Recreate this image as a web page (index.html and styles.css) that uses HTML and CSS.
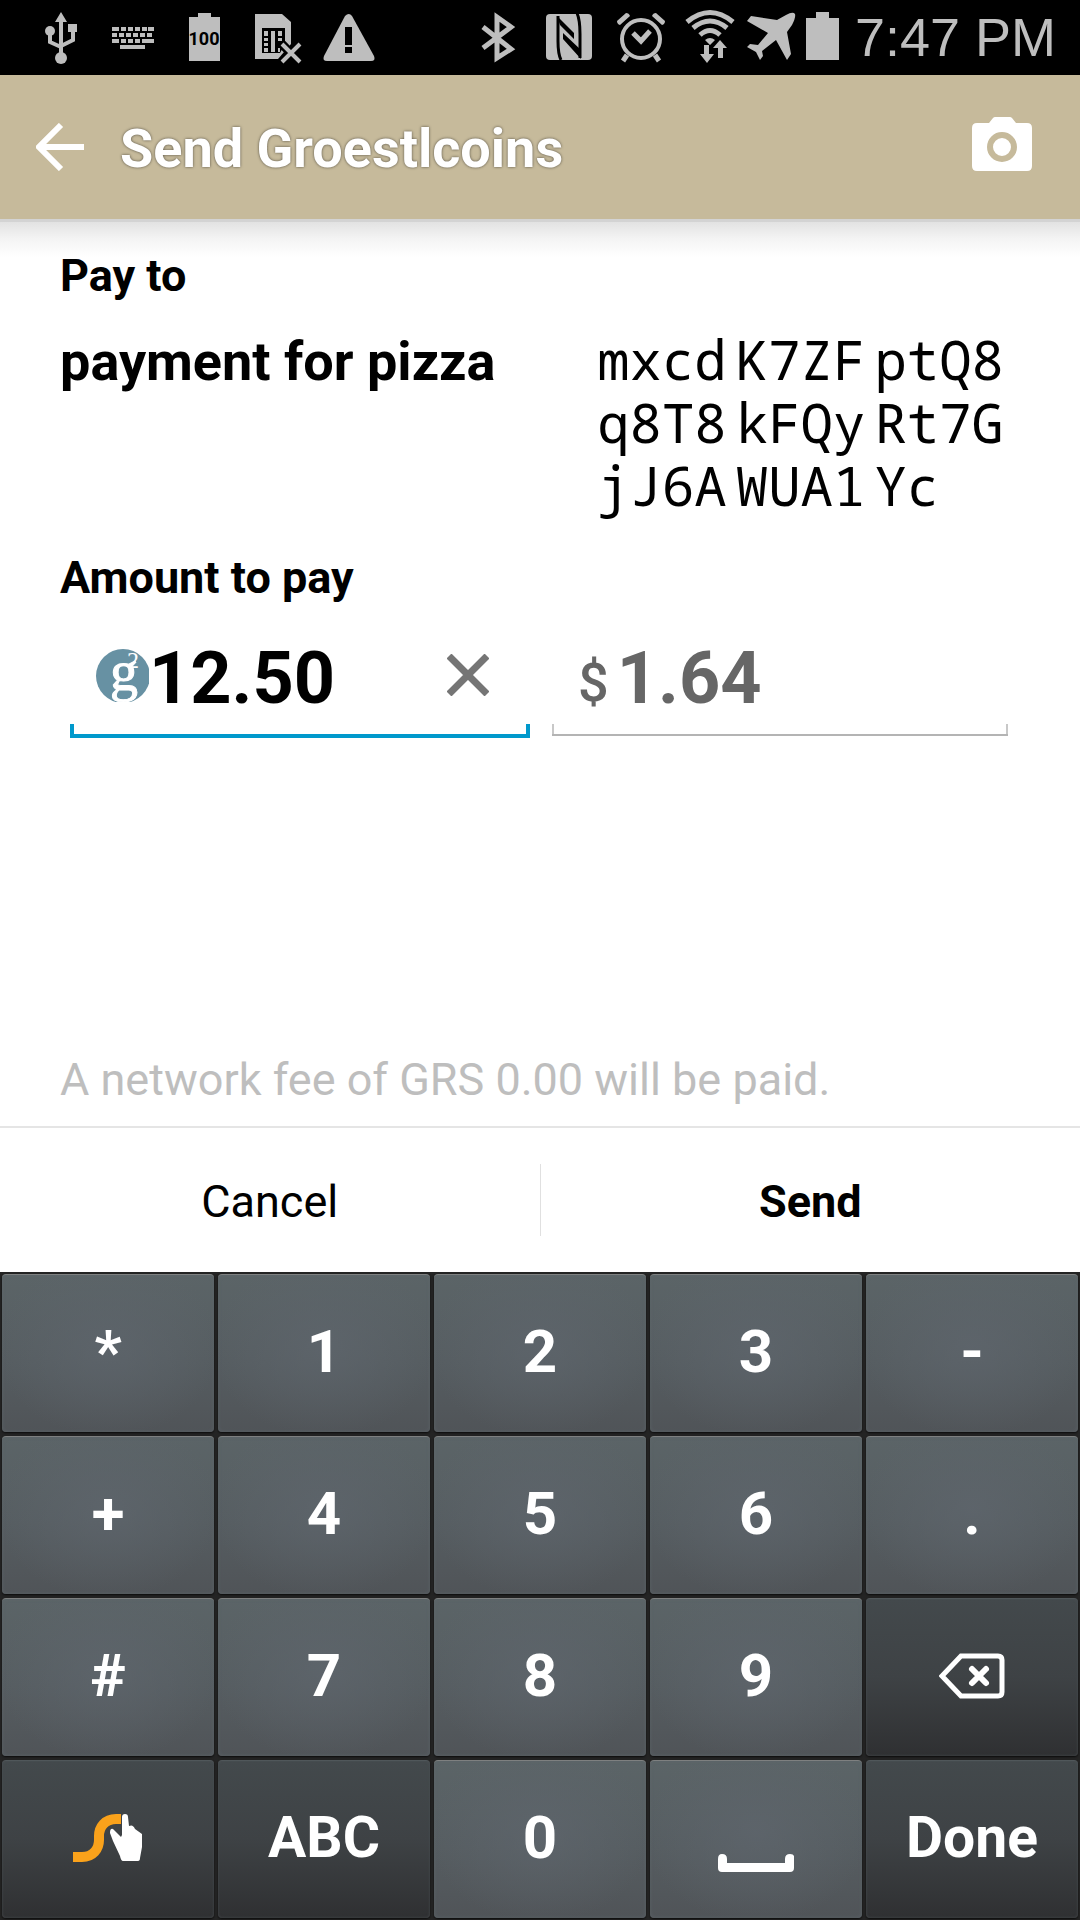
FILE: index.html
```html
<!DOCTYPE html>
<html lang="en">
<head>
<meta charset="utf-8">
<meta name="viewport" content="width=device-width, initial-scale=1">
<title>Send Groestlcoins</title>
<link rel="stylesheet" href="styles.css">
</head>
<body>
<div class="screen">
  <div class="status">
    <div class="status-group">
      <svg class="si" viewBox="24 0 72 75" aria-hidden="true"><path d="M61 20v36M61 47l-11-5V31M61 46l12-6V28" fill="none" stroke="currentColor" stroke-width="4"/><path d="M61 12l6 10H55zM68 24h9v8h-9z"/><circle cx="50" cy="31" r="5"/><circle cx="61" cy="58" r="6"/></svg>
      <svg class="si" viewBox="96 0 72 75" aria-hidden="true"><path d="M114 29h40M112 35h42M114 41h40" fill="none" stroke="currentColor" stroke-width="4" stroke-dasharray="5 2"/><path d="M112 27h4v4h-4zM148 27h6v4h-6zM112 39h6v4h-6zM147 39h7v4h-7zM120 45h25v4h-25z"/></svg>
      <svg class="si" viewBox="168 0 72 75" aria-hidden="true"><path d="M189 17h9v-4h13v4h9v44h-31z"/><text class="charge" x="204" y="45" text-anchor="middle">100</text></svg>
      <svg class="si" viewBox="240 0 72 75" aria-hidden="true"><path d="M255 14h27l9 8v22l-13 15H255z"/><path d="M262 28h23v16l-5 9h-18z" fill="#000"/><path d="M264 31h4v5h-4zM264 38h4v3h-4zM264 43h4v3h-4zM264 48h4v4h-4zM271 31h4v21h-4zM278 31h4v5h-4zM278 38h4v3h-4zM278 48h2v4h-2z"/><path d="M282 44l17 18M299 44l-17 18" stroke="#000" stroke-width="9"/><path d="M282 44l18 18M300 44l-18 18" stroke="currentColor" stroke-width="4"/></svg>
      <svg class="si" viewBox="312 0 72 75" aria-hidden="true"><path d="M345 16q4-4 7 0l22 40q2 5-3 5h-44q-5 0-3-5z"/><path d="M345 27h7v18h-7zM345 47h7v6h-7z" fill="#000"/></svg>
    </div>
    <div class="status-group">
      <svg class="si" viewBox="462 0 72 75" aria-hidden="true"><path d="M484 27l28 22-14 9V17l14 10-28 21" fill="none" stroke="currentColor" stroke-width="5"/></svg>
      <svg class="si" viewBox="534 0 72 75" aria-hidden="true"><rect x="547" y="14" width="46" height="46" rx="4"/><path d="M559 16v25q0 13 3 19M578 13q3 7 3 21v24" fill="none" stroke="#000" stroke-width="3"/><path d="M558 16l17 17v6l-14-14zM564 33l18 17v9l-18-20z" fill="#000"/></svg>
      <svg class="si" viewBox="606 0 72 75" aria-hidden="true"><circle cx="642" cy="39" r="19" fill="none" stroke="currentColor" stroke-width="4"/><path d="M634 33l8 8 9-10M628 55l-4 6M656 55l4 6" fill="none" stroke="currentColor" stroke-width="5"/><path d="M618 21l9-8q3 0 4 3l-10 9q-3-1-3-4zM666 21l-9-8q-3 0-4 3l10 9q3-1 3-4z"/></svg>
      <svg class="si si-wifi" viewBox="678 0 66 75" aria-hidden="true"><path d="M688 22q23-19 46 0M694 28q17-14 34 0M701 35q10-9 20 0" fill="none" stroke="currentColor" stroke-width="5"/><path d="M706 40q5-4 10 0l-5 5zM705 45h5v9h5l-7 9-7-9h4zM719 58h5v-10h4l-7-8-7 8h5z"/></svg>
      <svg class="si si-plane" viewBox="744 0 54 75" aria-hidden="true"><path d="M748 21l4-5 26 4 9-5q7-4 9-1 1 3-3 11l-5 7 4 22-4 6-11-20-14 11 1 5-3 4-4-8-9-5 3-3 8 1 10-12z"/></svg>
      <svg class="si si-battery" viewBox="798 0 50 75" aria-hidden="true"><path d="M807 18h10v-6h13v6h10v42h-33z"/></svg>
      <span class="clock">7:47 PM</span>
    </div>
  </div>

  <header class="appbar">
    <button class="icon-button" type="button" aria-label="Back"><svg width="48" height="48" viewBox="0 0 48 48"><path d="M48 24H4M25 2L3 24l22 22" fill="none" stroke="#fff" stroke-width="6"/></svg></button>
    <h1 class="title">Send Groestlcoins</h1>
    <button class="icon-button icon-camera" type="button" aria-label="Scan code"><svg width="60" height="54" viewBox="0 0 60 54"><path d="M5 6h12l4-5q1-1 2-1h15q1 0 2 1l4 5h11q5 0 5 5v38q0 5-5 5H5q-5 0-5-5V11q0-5 5-5z" fill="#fff"/><circle cx="30" cy="30" r="12" fill="none" stroke="#c6ba9b" stroke-width="6"/></svg></button>
  </header>

  <main class="content">
    <h2 class="heading">Pay to</h2>
    <div class="recipient">
      <p class="name">payment for pizza</p>
      <p class="address"><span>mxcd</span><span>K7ZF</span><span>ptQ8</span><span>q8T8</span><span>kFQy</span><span>Rt7G</span><span>jJ6A</span><span>WUA1</span><span>Yc</span></p>
    </div>
    <h2 class="heading"><label for="amount">Amount to pay</label></h2>
    <div class="amounts">
      <div class="field field-active">
        <svg class="coin" viewBox="0 0 53 53" aria-hidden="true"><defs><clipPath id="disc"><circle cx="27" cy="27" r="27"/></clipPath></defs><g clip-path="url(#disc)"><rect width="53" height="53" fill="#6791a3"/><text class="coin-g" x="14" y="41">g</text><text class="coin-2" x="31" y="19">2</text></g></svg>
        <input class="amount" id="amount" type="text" inputmode="decimal" value="12.50">
        <button class="clear" type="button" aria-label="Clear amount"><svg width="42" height="42" viewBox="0 0 42 42"><path d="M2 2l38 38M40 2L2 40" stroke="#757575" stroke-width="7"/></svg></button>
      </div>
      <div class="field">
        <label class="currency" for="local">$</label>
        <input class="amount amount-local" id="local" type="text" inputmode="decimal" value="1.64">
      </div>
    </div>
    <p class="fee">A network fee of GRS 0.00 will be paid.</p>
  </main>

  <div class="actions">
    <button class="action" type="button">Cancel</button>
    <button class="action action-main" type="button">Send</button>
  </div>

  <div class="keyboard">
    <button class="key" type="button">*</button>
    <button class="key" type="button">1</button>
    <button class="key" type="button">2</button>
    <button class="key" type="button">3</button>
    <button class="key" type="button">-</button>
    <button class="key" type="button">+</button>
    <button class="key" type="button">4</button>
    <button class="key" type="button">5</button>
    <button class="key" type="button">6</button>
    <button class="key" type="button">.</button>
    <button class="key" type="button">#</button>
    <button class="key" type="button">7</button>
    <button class="key" type="button">8</button>
    <button class="key" type="button">9</button>
    <button class="key key-dark" type="button" aria-label="Delete"><svg width="66" height="46" viewBox="0 0 66 46"><path d="M22 3h37q4 0 4 4v32q0 4-4 4H22L3 23z" fill="none" stroke="#fff" stroke-width="5"/><path d="M33 16l14 14M47 16L33 30" stroke="#fff" stroke-width="6" stroke-linecap="round"/></svg></button>
    <button class="key key-dark" type="button" aria-label="Swype"><svg width="70" height="50" viewBox="73 1812 70 50"><path d="M73 1856h9c11 0 17-8 17-17v-4c0-9 6-17 17-17h5" fill="none" stroke="#faa21b" stroke-width="10"/><path d="M122 1816q0-3 3-3t3 3l1 9q4-2 6 3l7 5v13l-2 11q0 3-2 3h-15q-2 0-3-5l-7-15-3-8q0-5 3-4l8 8 1-2z" fill="#fff"/></svg></button>
    <button class="key key-dark" type="button">ABC</button>
    <button class="key" type="button">0</button>
    <button class="key key-space" type="button" aria-label="Space"><svg width="76" height="18" viewBox="0 0 76 18"><path d="M4 0q5 0 5 5v4h58V5q0-5 5-5t4 5v9q0 4-4 4H4q-4 0-4-4V5q0-5 4-5z" fill="#fff"/></svg></button>
    <button class="key key-dark" type="button">Done</button>
  </div>
</div>
</body>
</html>
```
FILE: styles.css
```css
* { box-sizing: border-box; }
body { margin: 0; background: #fff; color: #000; font-family: Roboto, "Liberation Sans", sans-serif; }
h1, h2, p { margin: 0; }
button, input { margin: 0; padding: 0; border: 0; background: none; color: inherit; font: inherit; outline: none; }
svg { display: block; }
.screen { display: flex; flex-direction: column; min-height: 100vh; }

.status { display: flex; justify-content: space-between; height: 75px; padding: 0 24px; background: #000; color: #bebebe; }
.status-group { display: flex; align-items: center; }
.si { width: 72px; height: 75px; fill: currentColor; }
.si-wifi { width: 66px; }
.si-plane { width: 54px; }
.si-battery { width: 50px; }
.charge { fill: #000; font-size: 18px; font-weight: 700; }
.clock { padding-left: 8px; font-family: "Liberation Sans", sans-serif; font-size: 54px; line-height: 75px; }

.appbar { display: flex; align-items: center; height: 144px; padding: 0 48px 0 36px; background: #c6ba9b; }
.icon-camera { padding-bottom: 6px; }
.title { flex: 1; padding: 2px 0 0 36px; color: #fff; font-size: 54px; line-height: 63px; font-weight: 700; text-shadow: 0 0 3px rgba(0, 0, 0, .6); }

.content { display: flex; flex: 1; flex-direction: column; padding: 30px 60px 19px; background: linear-gradient(#d3d3d3 3px, #e2e2e2 3px, #f4f4f4 20px, #fff 38px); }
.heading { font-size: 45px; line-height: 54px; font-weight: 700; }
.recipient { display: flex; align-items: flex-start; justify-content: space-between; padding: 25px 16px 34px 0; }
.name { padding-top: 2px; font-size: 54px; line-height: 63px; font-weight: 700; }
.address { display: grid; grid-template-columns: repeat(3, auto); column-gap: 9px; font-family: "Droid Sans Mono", "Noto Sans Mono", "DejaVu Sans Mono", monospace; font-size: 54px; line-height: 63px; }
.amounts { display: grid; grid-template-columns: 460fr 456fr; column-gap: 22px; padding: 32px 12px 0 10px; }
.field { position: relative; display: flex; align-items: center; height: 84px; padding: 0 26px 13px; border-bottom: 2px solid #b4b4b4; box-sizing: content-box; min-width: 0; }
.field::after { content: ""; position: absolute; left: 0; right: 0; bottom: 0; height: 10px; border: solid #c8c8c8; border-width: 0 2px; }
.field-active { border-bottom: 4px solid #0099cc; padding-right: 41px; }
.field-active::after { border-color: #0099cc; border-width: 0 4px; }
.coin { flex: none; width: 53px; height: 53px; margin-bottom: 8px; }
.coin-g { fill: #fff; stroke: #fff; stroke-width: 1px; font-family: "Liberation Serif", serif; font-size: 56px; }
.coin-2 { fill: #fff; font-family: "Liberation Serif", serif; font-size: 24px; }
.amount { flex: 1; width: 100%; min-width: 0; height: 84px; font-size: 72px; line-height: 84px; font-weight: 700; }
.amount-local { padding-left: 8px; color: #666; }
.clear { flex: none; margin-bottom: 8px; }
.currency { padding-top: 6px; color: #666; font-size: 54px; line-height: 63px; font-weight: 500; }
.fee { margin-top: auto; color: #bebebe; font-size: 45px; line-height: 54px; }

.actions { display: flex; align-items: center; height: 146px; border-top: 2px solid #e5e5e5; }
.action { flex: 1; height: 72px; padding-top: 4px; font-size: 45px; line-height: 54px; }
.action-main { border-left: 1px solid #e0e0e0; font-weight: 700; }

.keyboard { display: grid; grid-template-columns: repeat(5, 1fr); grid-auto-rows: 158px; gap: 4px; padding: 2px; background: #242424; }
.key { display: flex; align-items: center; justify-content: center; padding-bottom: 4px; border-radius: 4px; border-top: 1px solid #7e8080; background: radial-gradient(ellipse at 50% 45%, rgba(94, 101, 108, .8), rgba(86, 93, 96, 0) 75%), linear-gradient(#5b6467, #565d61 55%, #505458); box-shadow: inset 0 0 4px rgba(96, 104, 108, .7), 0 1px 2px #0c0c0c; color: #fff; font-size: 60px; line-height: 72px; font-weight: 700; }
.key-dark { border-top-color: #50575a; background: linear-gradient(#43494c, #3e4245 50%, #2f3032); box-shadow: inset 0 0 3px rgba(80, 86, 90, .7), 0 1px 2px #0c0c0c; font-size: 57px; }
.key-space { align-items: flex-end; padding-bottom: 46px; }
```
